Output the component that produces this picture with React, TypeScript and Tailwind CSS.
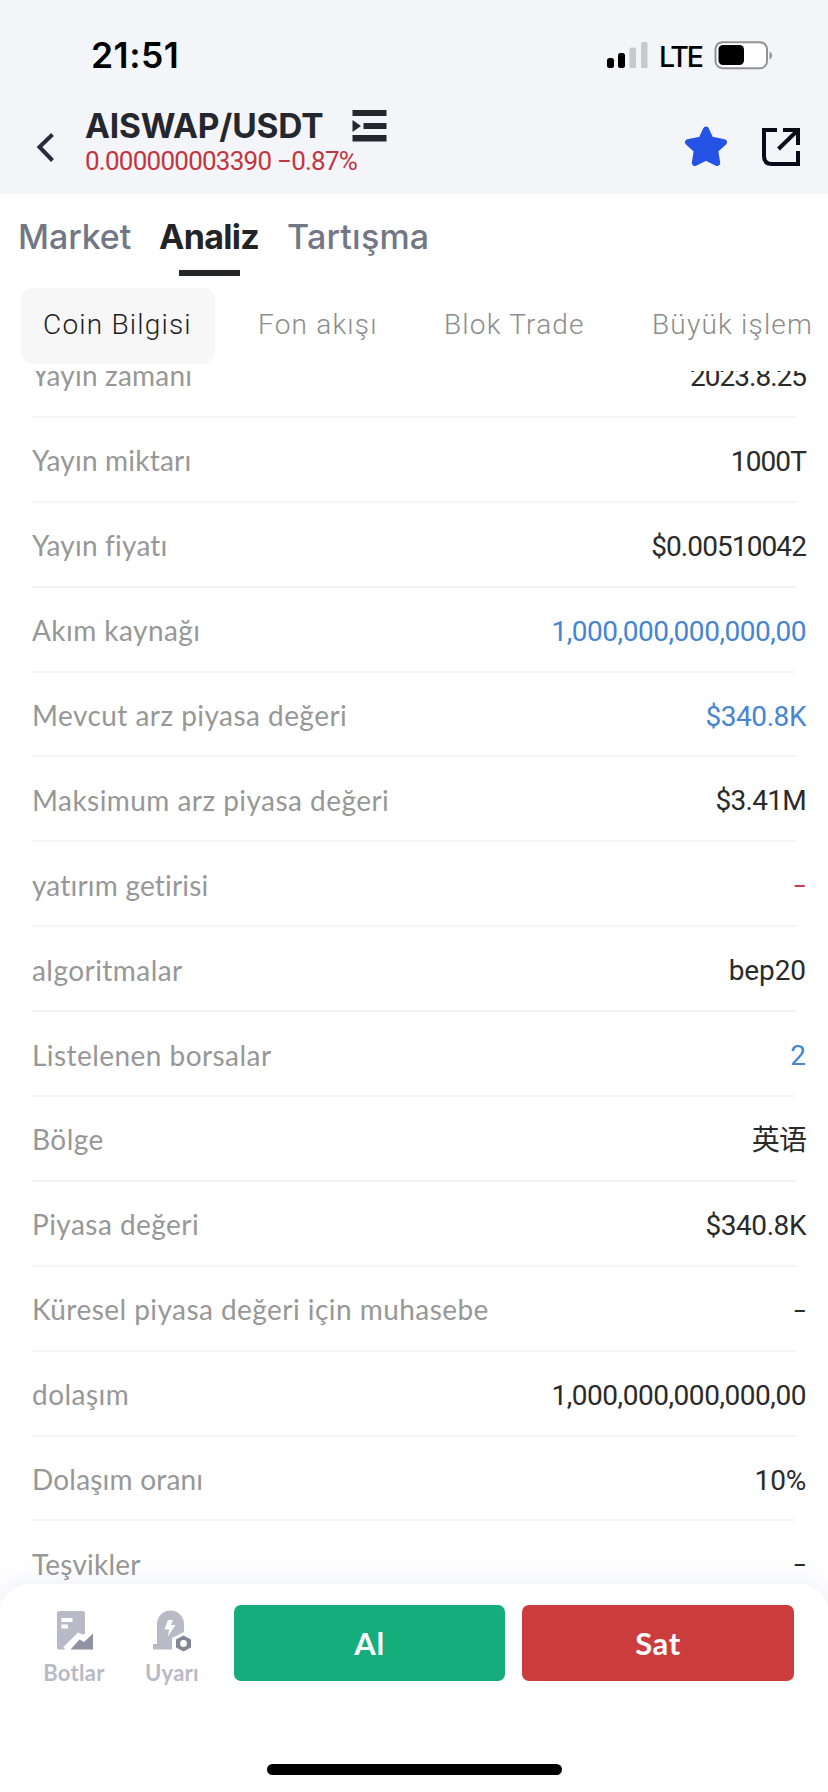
import React from "react"
import clsx from "clsx"

const rows = [
  { label: "Yayın zamanı", value: "2023.8.25", style: "text-[#2a2a2a] tracking-[-1px]", tight: true },
  { label: "Yayın miktarı", value: "1000T", tight: true },
  { label: "Yayın fiyatı", value: "$0.00510042", tight: true },
  { label: "Akım kaynağı", value: "1,000,000,000,000,00", style: "text-[#4585d3] tracking-[-0.450px]" },
  { label: "Mevcut arz piyasa değeri", value: "$340.8K", style: "text-[#4585d3] tracking-[-0.450px]" },
  { label: "Maksimum arz piyasa değeri", value: "$3.41M", style: "text-[#2a2a2a] tracking-[-0.700px]" },
  { label: "yatırım getirisi", value: "–", style: "text-[#c93d4c] text-[20px] font-medium", tight: true },
  { label: "algoritmalar", value: "bep20", style: "text-[#2a2a2a] tracking-[-0.100px]" },
  { label: "Listelenen borsalar", value: "2", style: "text-[#4585d3]" },
  { label: "Bölge", value: "英语" },
  { label: "Piyasa değeri", value: "$340.8K", style: "text-[#2a2a2a] tracking-[-0.450px]" },
  { label: "Küresel piyasa değeri için muhasebe", value: "–", style: "text-[#2a2a2a] text-[20px] font-medium" },
  { label: "dolaşım", value: "1,000,000,000,000,00", style: "text-[#2a2a2a] tracking-[-0.450px]" },
  { label: "Dolaşım oranı", value: "10%", style: "text-[#2a2a2a] tracking-[-0.200px]", tight: true },
  { label: "Teşvikler", value: "–", style: "text-[#2a2a2a] text-[20px] font-medium", tight: true },
]

const StatusBar = () => {
  return (
    <div className="flex h-[98px] items-start justify-between pl-[91px] pr-[55px] pt-[35px] text-black">
      <p className="font-['Inter'] text-[35.500px] leading-[42px] font-semibold tracking-[0.500px]">21:51</p>
      <div className="flex items-start pt-[6px]">
        <svg width="43" height="28" viewBox="0 0 43 28">
          <rect x="0" y="17" width="7" height="10" rx="2.5" />
          <rect x="11" y="12" width="7" height="15" rx="2.5" />
          <rect x="22.500" y="6.500" width="6.500" height="20.500" rx="1.500" fill="#c8c8ca" />
          <rect x="34" y="1" width="6.500" height="26" rx="1.500" fill="#c8c8ca" />
        </svg>
        <p className="-mt-px ml-[9px] w-[55px] font-['Inter'] text-[28.500px] leading-[33px] font-medium tracking-[-2.200px]">LTE</p>
        <svg width="59" height="29" viewBox="0 0 59 29">
          <rect x="1.500" y="1.200" width="51.500" height="26" rx="7" fill="#fff" stroke="#929294" strokeWidth="2" />
          <rect x="4.500" y="4" width="25.500" height="20" rx="4.500" />
          <path d="M55.500 10.500c3.500 1.500 3.500 6.500 0 8z" fill="#929294" />
        </svg>
      </div>
    </div>
  )
}

const Header = () => {
  return (
    <div className="flex h-[95px] items-start text-[#25272f]">
      <svg className="mt-[32px] ml-[34px]" width="24" height="34" viewBox="0 0 24 34" fill="none" stroke="#262b3d" strokeWidth="4">
        <path d="M18.500 4.500 5.500 17l13 13.500" />
      </svg>
      <div className="ml-[27px]">
        <div className="flex items-start">
          <p className="w-[267px] pt-[8px] font-['Inter'] text-[33.500px] leading-[41px] font-bold tracking-[-0.180px]">
            AISWAP/USDT
          </p>
          <svg className="mt-[11px]" width="36" height="34" viewBox="0 0 36 34" fill="#25272f">
            <path d="M.500 1H34.500V7H.500zM11.500 14H34.500V20H11.500zM.500 26H34.500V32.500H.500zM.500 11 9 17 .500 23z" />
          </svg>
        </div>
        <p className="-mt-[2px] font-['Roboto'] text-[26px] leading-[32px] text-[#c2363f] tracking-[-0.750px]">
          0.000000003390 −0.87%
        </p>
      </div>
      <svg className="mt-[27px] mr-[33px] ml-auto" width="44" height="43" viewBox="0 0 44 43" fill="#2453e6" stroke="#2453e6" strokeWidth="6" strokeLinejoin="round">
        <path d="M22 4.500 26.700 14.500 40 17.200 31.200 25.200 33.200 38 22 32.500 10.800 38 12.800 25.200 4 17.200 17.300 14.500z" />
      </svg>
      <svg className="mt-[29px] mr-[25px]" width="42" height="42" viewBox="0 0 42 42" fill="none" stroke="#090c18" strokeWidth="4">
        <path d="M16 3H3V29Q3 37 11 37H37V24M22 3H37V18M36 4 17.500 22" />
      </svg>
    </div>
  )
}

const Tabs = () => {
  return (
    <div className="flex h-[94px] items-start pt-[22px] pl-[18px] font-['Inter'] text-[34px] leading-[42px] font-medium text-[#717785]">
      <p className="w-[141px] tracking-[-0.100px]">Market</p>
      <div className="relative w-[128px] font-bold text-[#222326] tracking-[-0.700px]">
        Analiz
        <div className="absolute top-[54px] left-[20px] h-[6px] w-[61px] bg-[#25262a]" />
      </div>
      <p className="tracking-[0.200px]">Tartışma</p>
    </div>
  )
}

const SubTabs = () => {
  return (
    <div className="flex h-[76px] items-start pl-[21px] font-['Roboto'] text-[28px] leading-[73px] font-light tracking-[1.200px] text-[#8c8c8c] whitespace-nowrap">
      <p className="h-[76px] w-[194px] rounded-[12px] bg-[#f7f7f7] pl-[22px] text-[#1d1d1d]">Coin Bilgisi</p>
      <p className="ml-[43px] w-[186px]">Fon akışı</p>
      <p className="w-[208px]">Blok Trade</p>
      <p>Büyük işlem</p>
    </div>
  )
}

const BottomBar = () => {
  return (
    <div className="relative flex h-[208px] shrink-0 flex-col rounded-t-[28px] bg-white shadow-[0_-2px_26px_rgba(120,130,190,0.14)]">
      <div className="flex pt-[21px] pl-[35px] font-['Lato'] text-[22px] leading-[28px] font-bold text-[#b9bac6]">
        <div className="flex w-[78px] flex-col items-center">
          <svg className="mt-[5px] ml-[3px]" width="40" height="42" viewBox="0 0 40 42">
            <path d="M3 1H27Q29 1 29 3V24L23 25 10 39.500H3Q1 39.500 1 37.500V3Q1 1 3 1z" fill="#b9bac8" />
            <path d="M5.500 8H16.500V12H5.500zM5.500 14.500H12V18.500H5.500z" fill="#fff" />
            <path d="M9 39 22.500 25.500 28 28 38 19" fill="none" stroke="#fff" strokeWidth="5" />
            <path d="M14.500 39.500 23.500 29.500 28 32 37 23.500V39.500z" fill="#9091a1" />
          </svg>
          <p className="mt-[7px] tracking-[0.300px]">Botlar</p>
        </div>
        <div className="ml-[20px] flex w-[78px] flex-col items-center">
          <svg className="mt-[5px]" width="40" height="42" viewBox="0 0 40 42">
            <path d="M5 34V14a13.500 13.500 0 0 1 27 0V22L20 28V39.500H1V34z" fill="#b9bac8" />
            <path d="M16 10H21L19 15H23.500L16 26.500 17 19.500H12.500z" fill="#fff" />
            <path d="M31.500 22.500 41 28V39L31.500 44 22 39V28z" fill="#fff" />
            <path d="M31.500 25.500 39 29.500V37.500L31.500 41.500 24 37.500V29.500z" fill="#858694" />
            <circle cx="31.500" cy="33.500" r="3.400" fill="#fff" />
          </svg>
          <p className="mt-[7px] tracking-[0.300px]">Uyarı</p>
        </div>
        <div className="ml-[23px] flex gap-[17px] text-[31px] leading-[77px] tracking-[0.600px] text-white">
          <button className="h-[76px] w-[271px] rounded-[7px] bg-[#15ad7b]">Al</button>
          <button className="h-[76px] w-[272px] rounded-[7px] bg-[#cb3c3c]">Sat</button>
        </div>
      </div>
      <div className="mx-auto mt-auto mb-[17px] h-[11px] w-[295px] rounded-full bg-black" />
    </div>
  )
}

const App = () => {
  return (
    <div className="flex h-[1792px] w-[828px] flex-col overflow-hidden bg-white">
      <div className="h-[194px] shrink-0 bg-[#f4f5f8]">
        <StatusBar />
        <Header />
      </div>
      <Tabs />
      <SubTabs />
      <div className="mt-[7px] flex h-[1213px] shrink-0 flex-col overflow-hidden">
        <div className="-mt-[38px]">
          {rows.map((row) => (
            <div key={row.label} className="relative flex h-[84.900px] items-center justify-between pr-[22px] pl-8">
              <p
                className={clsx(
                  "font-['Lato'] text-[28px] leading-[34px] text-[#979797]",
                  row.tight ? "tracking-[0.200px]" : "tracking-[0.450px]"
                )}
              >
                {row.label}
              </p>
              <p
                className={clsx(
                  "pt-[3px] font-['Roboto','Noto_Sans_CJK_SC',sans-serif] leading-[34px]",
                  row.value !== "–" && "text-[28px]",
                  row.style || "text-[#2a2a2a] tracking-[-0.900px]"
                )}
              >
                {row.value}
              </p>
              <div className="absolute right-[32px] bottom-0 left-8 h-[2px] bg-[#f5f5f5]" />
            </div>
          ))}
        </div>
      </div>
      <BottomBar />
    </div>
  )
}

export default App
